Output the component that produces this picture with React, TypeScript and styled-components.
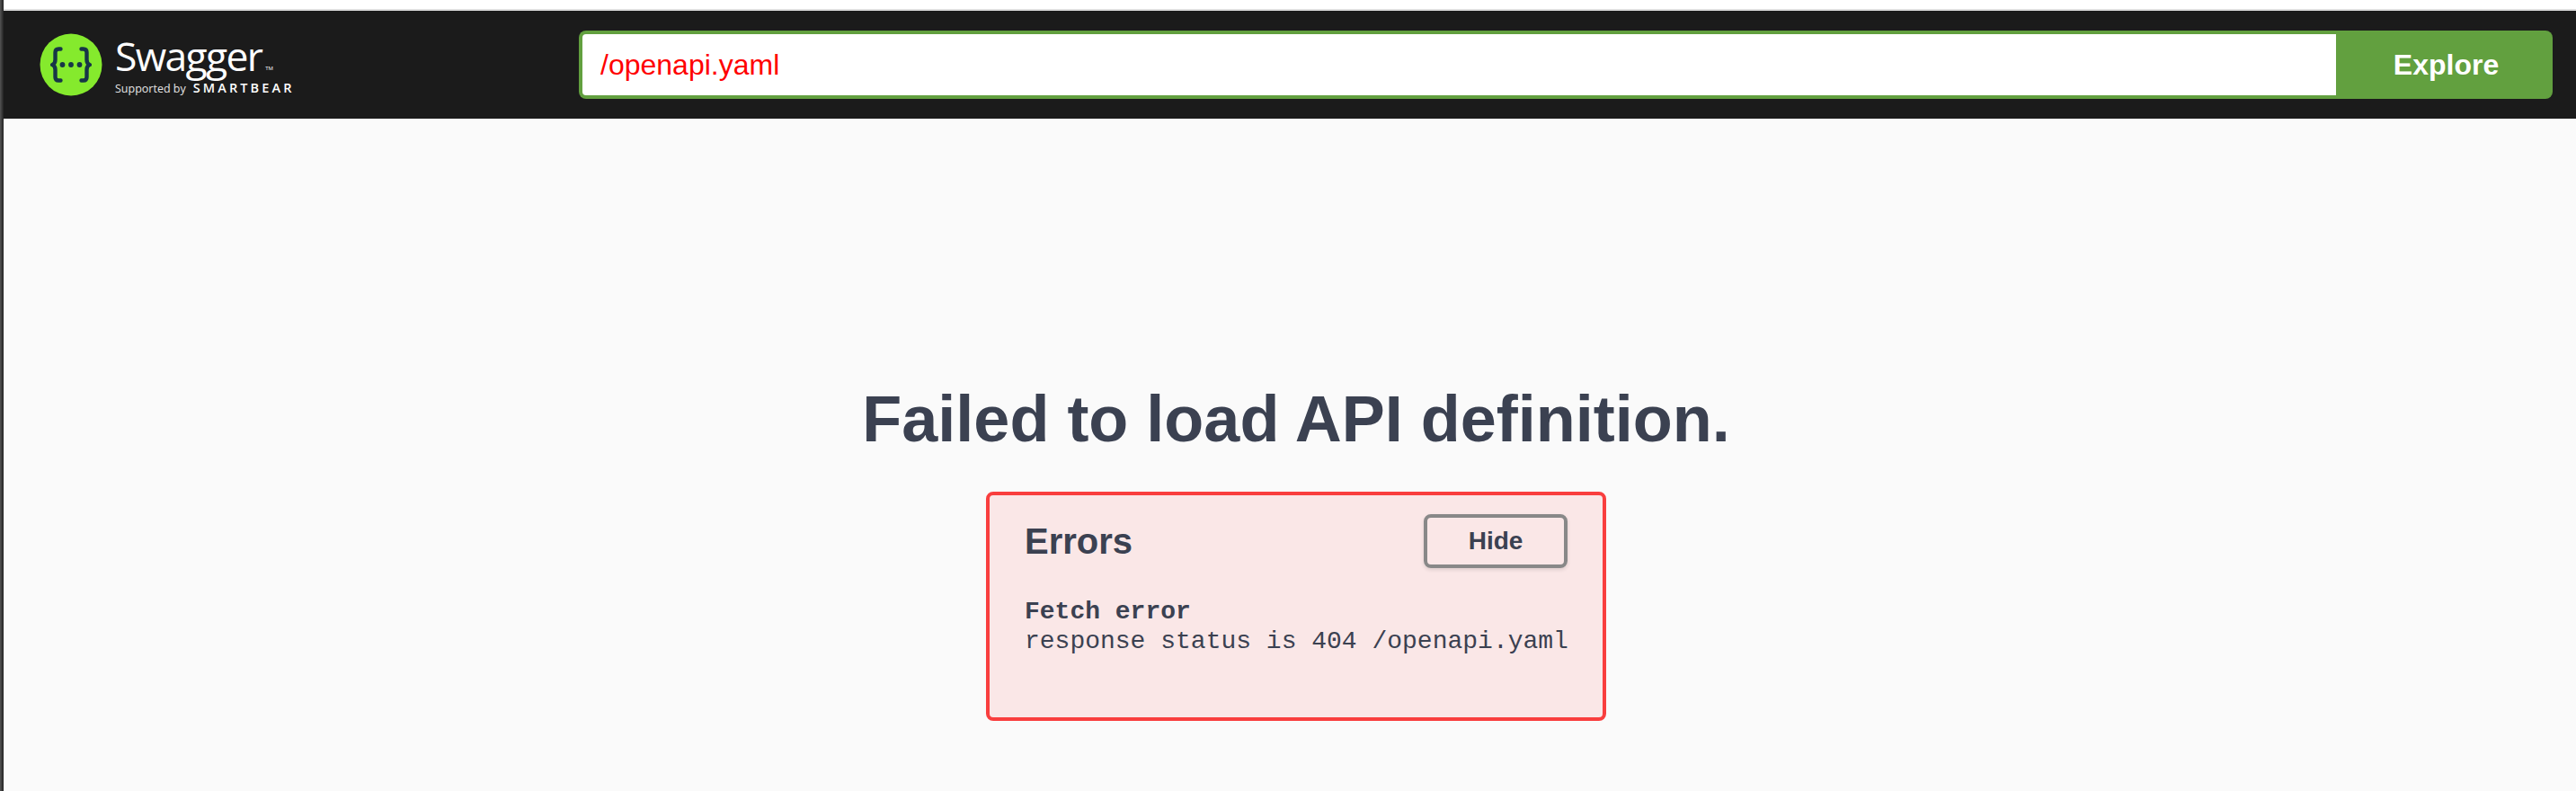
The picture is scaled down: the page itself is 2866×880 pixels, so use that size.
import styled, { createGlobalStyle } from "styled-components"

const GlobalStyle = createGlobalStyle`
    html, body {
        margin: 0;
        padding: 0;
        background: #fafafa;
    }
    body {
        width: 2866px;
        height: 880px;
        overflow: hidden;
        font-family: "Liberation Sans", Arial, sans-serif;
    }
`

const Page = styled.div`
    display: flex;
    width: 2866px;
    height: 880px;
`

const WindowEdge = styled.div`
    flex: 0 0 4px;
    background: linear-gradient(90deg, #555 0%, #3a3a3a 50%, #222 100%);
`

const Content = styled.div`
    flex: 1;
    display: flex;
    flex-direction: column;
    min-width: 0;
`

const TopStrip = styled.div`
    height: 10px;
    background: #fff;
    border-bottom: 2px solid #dedede;
`

const Topbar = styled.header`
    display: flex;
    align-items: center;
    height: 120px;
    padding: 0 26px 0 40px;
    box-sizing: border-box;
    background: #1b1b1b;
`

const Logo = styled.div`
    display: flex;
    flex: 0 0 600px;
    align-items: center;
    gap: 14px;
`

const Brand = styled.div`
    display: flex;
    flex-direction: column;
    color: #fff;
    font-family: "Open Sans", sans-serif;
`

const Wordmark = styled.div`
    display: flex;
    align-items: flex-end;
    height: 51px;
    font-size: 44.5px;
    font-weight: 400;
    line-height: 51px;
    letter-spacing: -1.7px;
`

const Trademark = styled.span`
    margin: 0 0 7px 4px;
    font-size: 6px;
    line-height: 8px;
    letter-spacing: 0;
`

const Supported = styled.div`
    display: flex;
    align-items: baseline;
    gap: 8px;
    margin-top: 2px;
    font-size: 12.5px;
    font-weight: 400;
    line-height: 18px;
    color: #e4e4e4;
`

const Smartbear = styled.span`
    font-size: 14.5px;
    font-weight: 600;
    letter-spacing: 3.1px;
    color: #fff;
`

const SearchForm = styled.form`
    flex: 1;
    display: flex;
    height: 76px;
`

const SearchInput = styled.input`
    flex: 1;
    min-width: 0;
    padding: 0 20px;
    box-sizing: border-box;
    border: 4px solid #62a03f;
    border-right: none;
    border-radius: 8px 0 0 8px;
    outline: none;
    background: #fff;
    color: #ff0000;
    font-family: "Liberation Sans", Arial, sans-serif;
    font-size: 32px;
`

const ExploreButton = styled.button`
    flex: 0 0 241px;
    padding: 0 0 0 4px;
    border: none;
    border-radius: 0 8px 8px 0;
    background: #62a03f;
    color: #fff;
    font-family: "Liberation Sans", Arial, sans-serif;
    font-size: 32px;
    font-weight: 700;
`

const Main = styled.main`
    flex: 1;
    display: flex;
    flex-direction: column;
    align-items: center;
    padding: 291px 0 0 14px;
    background: #fafafa;
    color: #3b4151;
`

const FailedTitle = styled.h1`
    margin: 0 0 38px;
    font-size: 72px;
    font-weight: 700;
    line-height: 86px;
`

const ErrorsCard = styled.section`
    width: 690px;
    height: 255px;
    padding: 21px 39px 0;
    box-sizing: border-box;
    border: 4px solid #f93e3e;
    border-radius: 8px;
    background: #fae7e7;
`

const ErrorsHeader = styled.div`
    display: flex;
    align-items: center;
    justify-content: space-between;
`

const ErrorsTitle = styled.h2`
    margin: 0;
    font-size: 40px;
    font-weight: 700;
    line-height: 46px;
`

const HideButton = styled.button`
    width: 160px;
    height: 60px;
    border: 4px solid #888;
    border-radius: 8px;
    background: transparent;
    box-shadow: 0 2px 4px rgba(0, 0, 0, 0.12);
    color: #3b4151;
    font-family: "Liberation Sans", Arial, sans-serif;
    font-size: 28px;
    font-weight: 700;
`

const ErrorText = styled.div`
    margin-top: 32px;
    font-family: "Liberation Mono", monospace;
    font-size: 28px;
    line-height: 33px;
    white-space: pre;
`

const ErrorName = styled.div`
    font-weight: 700;
`

const SwaggerMark = () => (
    <svg width="70" height="70" viewBox="0 0 70 70" aria-hidden="true">
        <circle cx="35" cy="35" r="34.5" fill="#85ea2d" />
        <g fill="none" stroke="#173647" strokeWidth="4.4" strokeLinecap="round" strokeLinejoin="round">
            <path d="M23.5 17.5h-2.2c-2.6 0-3.8 1.5-3.8 3.8v8.2c0 2.9-1.2 4.8-3.4 5.5 2.2.7 3.4 2.6 3.4 5.5v8.2c0 2.3 1.2 3.8 3.8 3.8h2.2" />
            <path d="M46.5 17.5h2.2c2.6 0 3.8 1.5 3.8 3.8v8.2c0 2.9 1.2 4.8 3.4 5.5-2.2.7-3.4 2.6-3.4 5.5v8.2c0 2.3-1.2 3.8-3.8 3.8h-2.2" />
        </g>
        <g fill="#173647">
            <circle cx="25.5" cy="35" r="2.9" />
            <circle cx="35" cy="35" r="2.9" />
            <circle cx="44.5" cy="35" r="2.9" />
        </g>
    </svg>
)

const App = () => {
    return (
        <Page>
            <GlobalStyle />
            <WindowEdge />
            <Content>
                <TopStrip />
                <Topbar>
                    <Logo>
                        <SwaggerMark />
                        <Brand>
                            <Wordmark>
                                Swagger
                                <Trademark>TM</Trademark>
                            </Wordmark>
                            <Supported>
                                Supported by
                                <Smartbear>SMARTBEAR</Smartbear>
                            </Supported>
                        </Brand>
                    </Logo>
                    <SearchForm>
                        <SearchInput type="text" defaultValue="/openapi.yaml" />
                        <ExploreButton type="button">Explore</ExploreButton>
                    </SearchForm>
                </Topbar>
                <Main>
                    <FailedTitle>Failed to load API definition.</FailedTitle>
                    <ErrorsCard>
                        <ErrorsHeader>
                            <ErrorsTitle>Errors</ErrorsTitle>
                            <HideButton type="button">Hide</HideButton>
                        </ErrorsHeader>
                        <ErrorText>
                            <ErrorName>Fetch error</ErrorName>
                            response status is 404 /openapi.yaml
                        </ErrorText>
                    </ErrorsCard>
                </Main>
            </Content>
        </Page>
    )
}

export default App
